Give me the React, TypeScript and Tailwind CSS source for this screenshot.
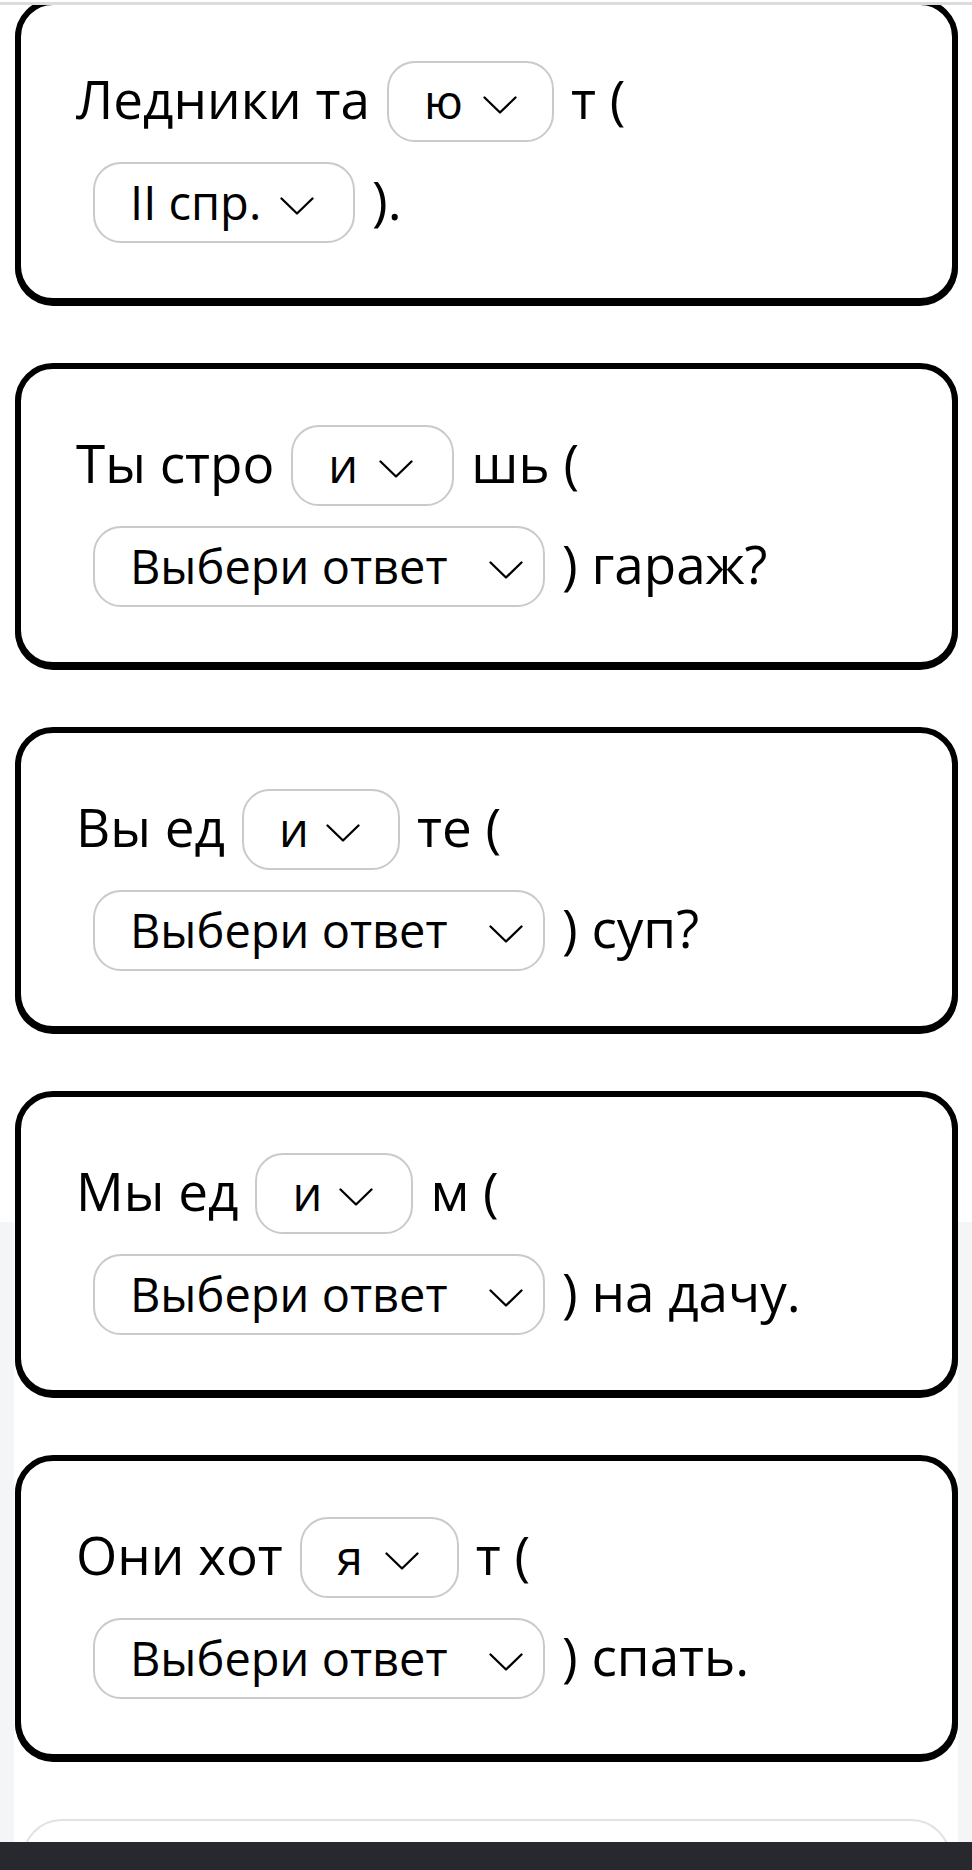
import React from "react";

type Part = { t: "text"; v: string } | { t: "sel"; v: string; w: number; pr: number };

const cards: Part[][] = [
  [
    { t: "text", v: "Ледники та" },
    { t: "sel", v: "ю", w: 167, pr: 35 },
    { t: "text", v: "т (" },
    { t: "sel", v: "II спр.", w: 262, pr: 39 },
    { t: "text", v: ")." },
  ],
  [
    { t: "text", v: "Ты стро" },
    { t: "sel", v: "и", w: 163, pr: 39 },
    { t: "text", v: "шь (" },
    { t: "sel", v: "Выбери ответ", w: 452, pr: 20 },
    { t: "text", v: ") гараж?" },
  ],
  [
    { t: "text", v: "Вы ед" },
    { t: "sel", v: "и", w: 158, pr: 38 },
    { t: "text", v: "те (" },
    { t: "sel", v: "Выбери ответ", w: 452, pr: 20 },
    { t: "text", v: ") суп?" },
  ],
  [
    { t: "text", v: "Мы ед" },
    { t: "sel", v: "и", w: 158, pr: 38 },
    { t: "text", v: "м (" },
    { t: "sel", v: "Выбери ответ", w: 452, pr: 20 },
    { t: "text", v: ") на дачу." },
  ],
  [
    { t: "text", v: "Они хот" },
    { t: "sel", v: "я", w: 159, pr: 38 },
    { t: "text", v: "т (" },
    { t: "sel", v: "Выбери ответ", w: 452, pr: 20 },
    { t: "text", v: ") спать." },
  ],
];

function Chevron() {
  return (
    <svg width="34" height="18" viewBox="0 0 34 18" className="shrink-0 self-center mt-[6px]">
      <polyline
        points="1.5,1.5 17,16.5 32.5,1.5"
        fill="none"
        stroke="#000"
        strokeWidth="2.3"
        strokeLinecap="round"
        strokeLinejoin="round"
      />
    </svg>
  );
}

function Select({ v, w, pr }: { v: string; w: number; pr: number }) {
  return (
    <div
      className="mx-[17px] h-[81px] shrink-0 flex items-center justify-between rounded-[28px] border-[2.5px] border-[#cacaca] bg-white pl-[35px] text-[47px] leading-none"
      style={{ width: w, paddingRight: pr }}
    >
      <span className="whitespace-pre">{v}</span>
      <Chevron />
    </div>
  );
}

function Card({ parts }: { parts: Part[] }) {
  return (
    <div className="h-[305px] shrink-0 rounded-[38px] border-[6px] border-black bg-white pl-[55px] pr-[70px] pt-[56px] shadow-[0_2px_0_#000]">
      <div className="flex flex-wrap items-baseline gap-y-[20px] text-[53px] leading-none text-black">
        {parts.map((p, i) =>
          p.t === "text" ? (
            <span key={i} className="whitespace-pre">
              {p.v}
            </span>
          ) : (
            <Select key={i} v={p.v} w={p.w} pr={p.pr} />
          )
        )}
      </div>
    </div>
  );
}

export default function App() {
  return (
    <div
      className="w-[972px] h-[1870px] overflow-hidden flex flex-col bg-white"
      style={{ fontFamily: '"Open Sans", "Noto Sans", sans-serif' }}
    >
      <div className="relative z-10 h-[5px] shrink-0 bg-white border-b-[3px] border-[#dcdcdc]" />
      <div className="-mt-[6px] flex-1 overflow-hidden bg-[linear-gradient(to_bottom,#ffffff_1223px,#f4f5f7_1223px)]">
        <div className="mx-[14px] min-h-full bg-white flex flex-col gap-[59px] pl-[1px]">
          {cards.map((c, i) => (
            <Card key={i} parts={c} />
          ))}
          <div className="mx-[7px] h-[200px] shrink-0 rounded-[40px] border-2 border-[#e2e2e2] bg-white" />
        </div>
      </div>
      <div className="h-[28px] shrink-0 bg-[#28292e]" />
    </div>
  );
}
